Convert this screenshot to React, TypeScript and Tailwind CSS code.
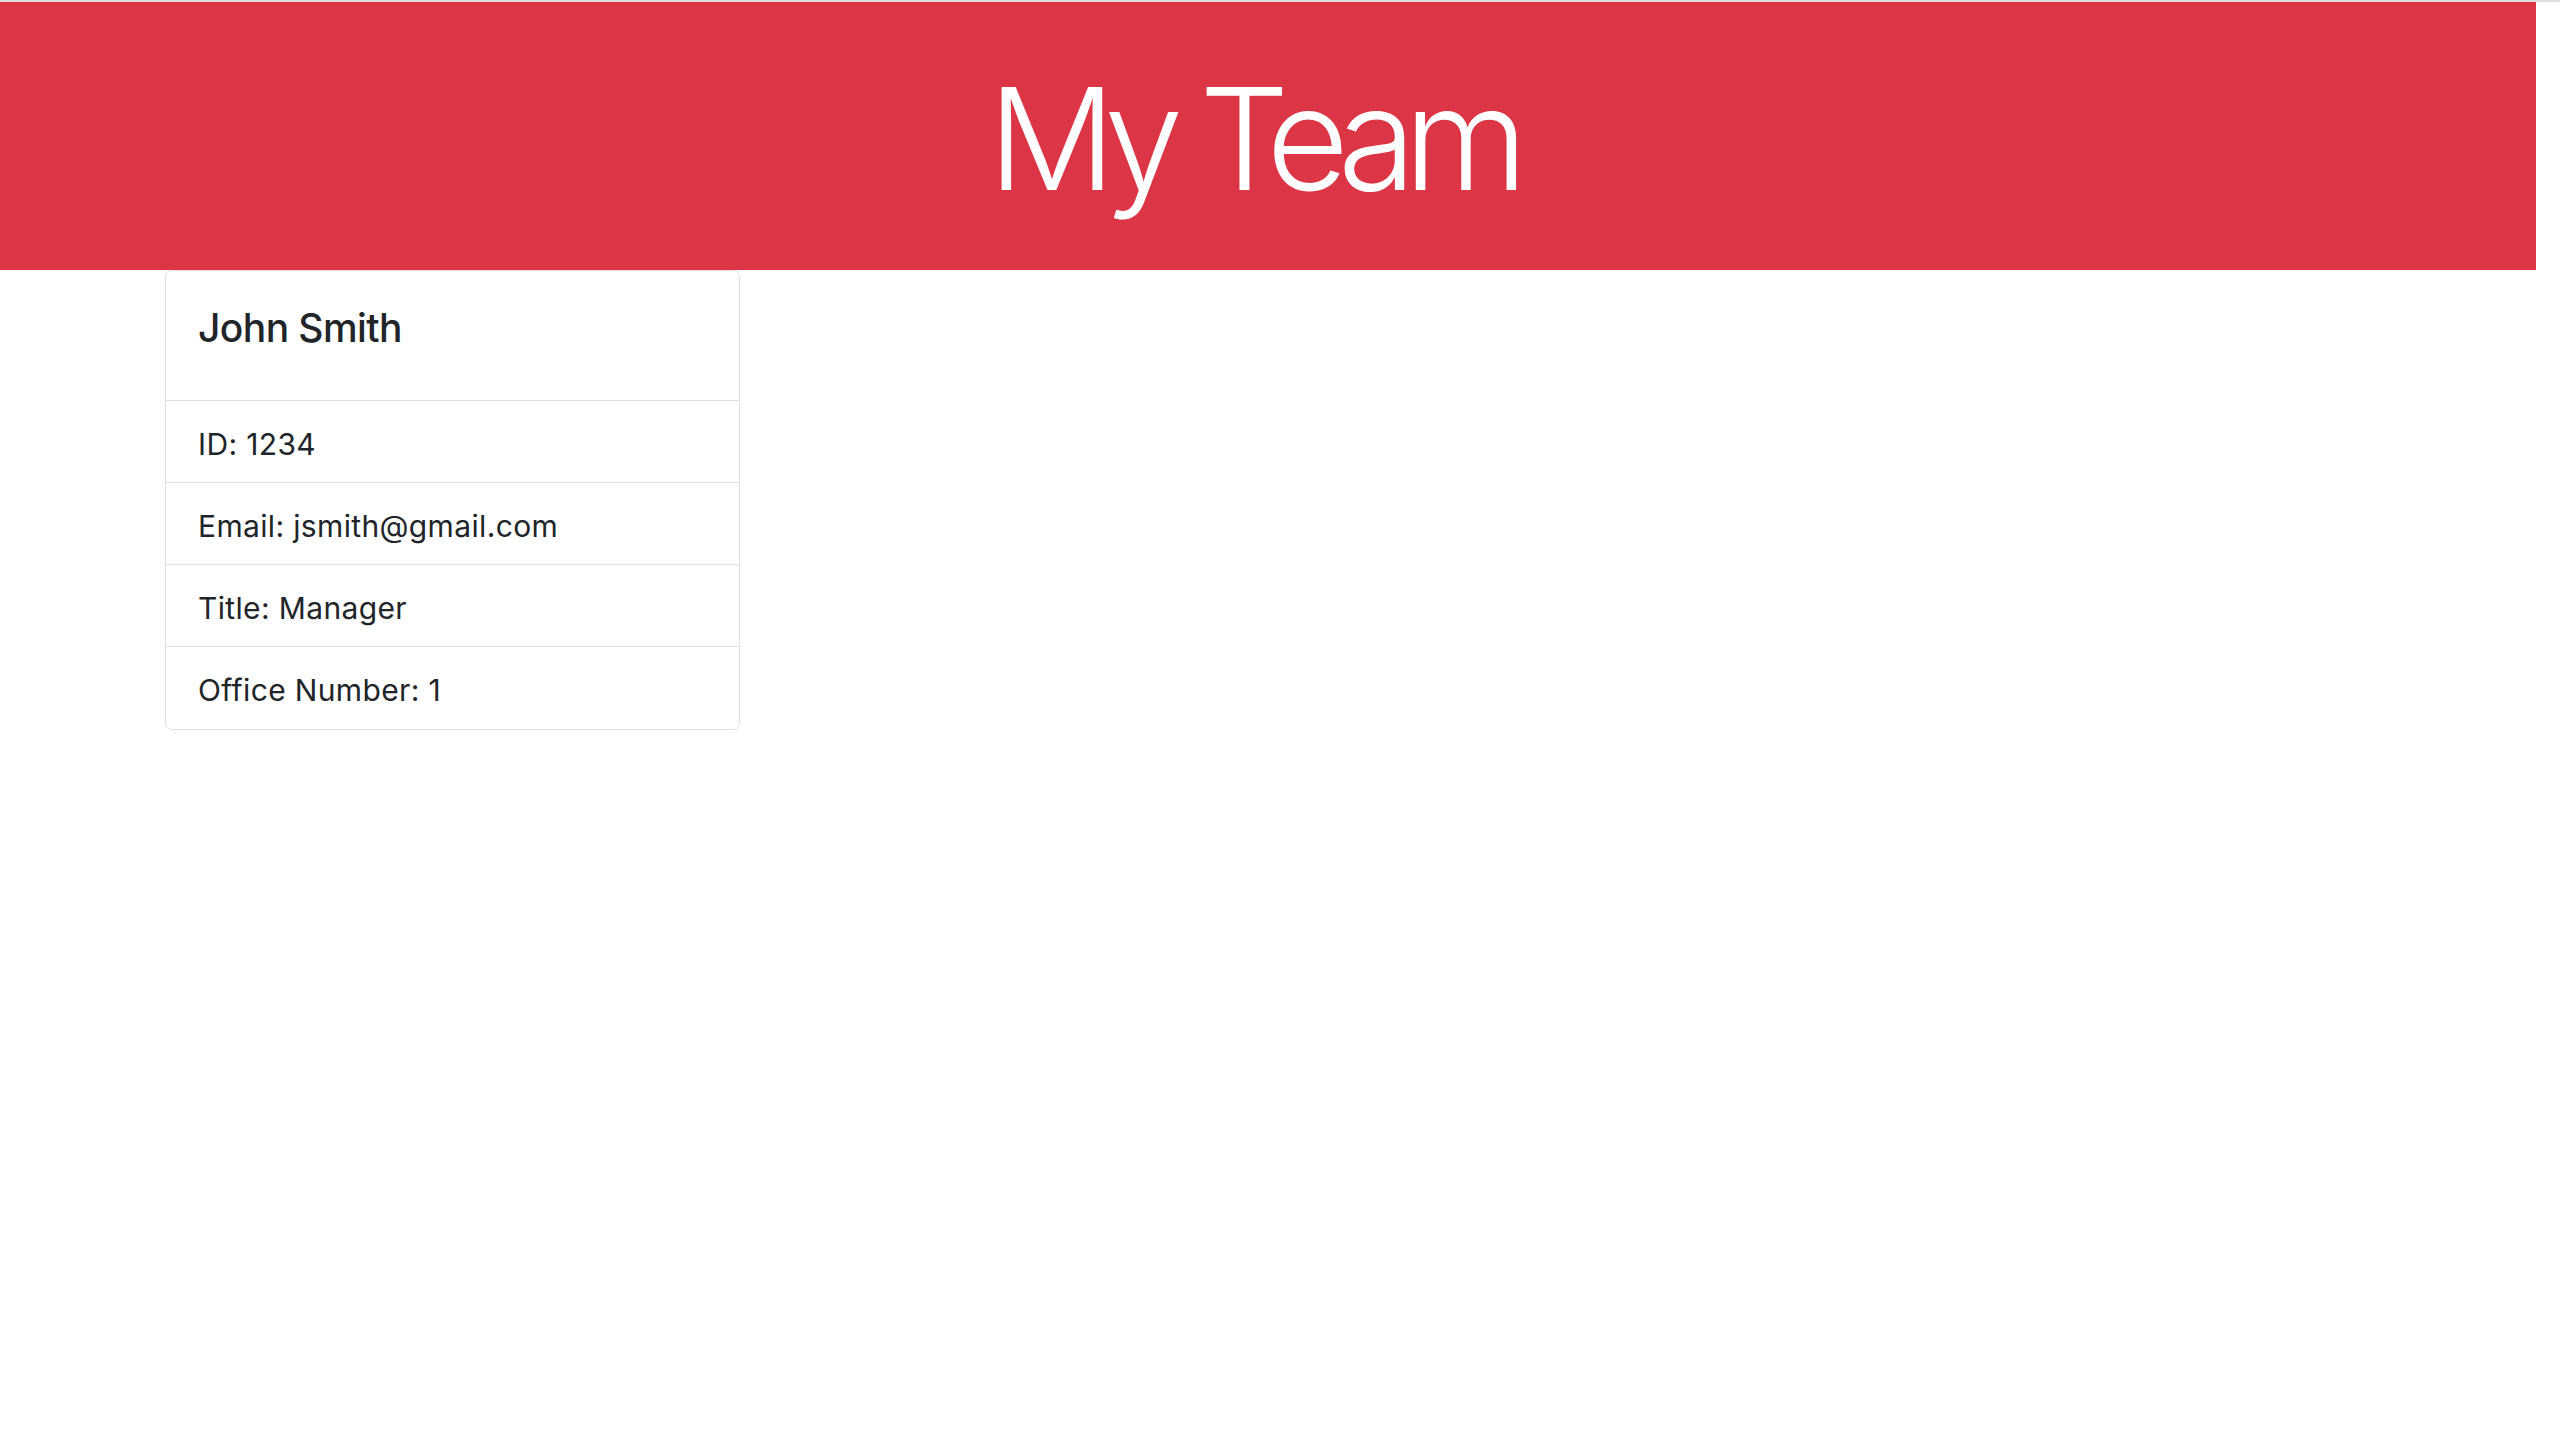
import React from "react";

type Member = {
  name: string;
  id: number;
  email: string;
  role: string;
  extra: { label: string; value: string };
};

const team: Member[] = [
  {
    name: "John Smith",
    id: 1234,
    email: "jsmith@gmail.com",
    role: "Manager",
    extra: { label: "Office Number", value: "1" },
  },
];

function MemberCard({ member }: { member: Member }) {
  const rows = [
    `ID: ${member.id}`,
    `Email: ${member.email}`,
    `Title: ${member.role}`,
    `${member.extra.label}: ${member.extra.value}`,
  ];

  return (
    <div className="w-[575px] border border-[#dfdfdf] rounded-[7px] bg-white text-[#212529]">
      <div className="h-[130px] border-b border-[#dfdfdf] pl-[32px] pt-[33px]">
        <h5 className="text-[39px] leading-[47px] font-medium tracking-[-0.6px]">{member.name}</h5>
      </div>
      <ul>
        {rows.map((row, i) => (
          <li
            key={row}
            className={`h-[82px] flex items-center pl-[32px] pt-[4px] text-[30px] leading-[36px] tracking-[0.35px] ${
              i < rows.length - 1 ? "border-b border-[#dfdfdf]" : ""
            }`}
          >
            {row}
          </li>
        ))}
      </ul>
    </div>
  );
}

export default function App() {
  return (
    <div className="min-h-screen bg-white font-['Inter','Liberation_Sans',sans-serif]">
      <div className="h-[2px] w-full bg-[#dedee2]" />
      <header className="w-[2536px] h-[268px] bg-[#dc3545] flex items-center justify-center pt-[4px] pr-[32px]">
        <h1 className="text-white text-[142px] leading-none font-light tracking-[-12px]">My Team</h1>
      </header>
      <div className="flex gap-8 pl-[165px]">
        {team.map((m) => (
          <MemberCard key={m.id} member={m} />
        ))}
      </div>
    </div>
  );
}
